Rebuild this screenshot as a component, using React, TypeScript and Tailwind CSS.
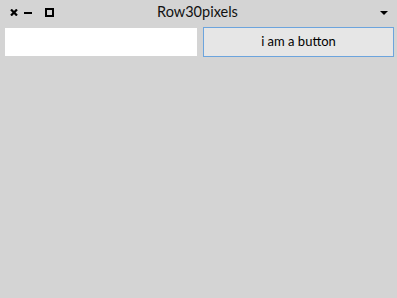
const App = () => {
    return (
        <div className="w-[397px] h-[298px] bg-[#d4d4d4] font-['Lato',sans-serif] text-black overflow-hidden">
            <div className="relative h-[25px] flex items-center">
                <div className="flex items-center w-[60px]">
                    <svg width="8" height="7" viewBox="0 0 8 7" className="ml-[10px]">
                        <path d="M1 0.5 L7 6.5 M7 0.5 L1 6.5" stroke="#000" strokeWidth="2.2" />
                    </svg>
                    <div className="ml-[6px] w-[8px] h-[2px] bg-black" />
                    <div className="ml-[13px] w-[9px] h-[9px] border-2 border-black" />
                </div>
                <div className="flex-1 text-center text-[14.5px] leading-none pr-[45px] text-[#111]">Row30pixels</div>
                <svg width="8" height="4" viewBox="0 0 8 4" className="mr-[9px]">
                    <path d="M0 0 H8 L4 4 Z" fill="#000" />
                </svg>
            </div>
            <div className="flex gap-[6px] pl-[5px] mt-[2px] h-[30px]">
                <input
                    type="text"
                    className="w-[192px] shrink-0 my-[1px] bg-white border-none outline-none px-1 text-[13px]"
                />
                <button className="w-[191px] shrink-0 bg-[#e6e6e6] border border-[#6ca4dd] text-[13px] text-black">
                    i am a button
                </button>
            </div>
        </div>
    );
};

export default App;
